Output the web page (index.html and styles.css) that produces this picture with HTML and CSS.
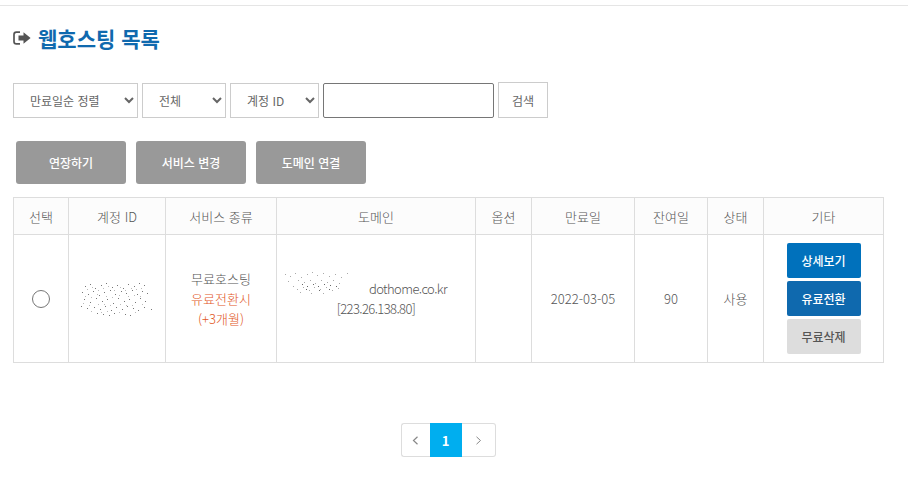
FILE: index.html
```html
<!DOCTYPE html>
<html lang="ko">
<head>
    <meta charset="UTF-8">
    <title>웹호스팅 목록</title>
    <link rel="stylesheet" href="styles.css">
</head>
<body>
<div class="wrap">
    <h1 class="title">
        <svg class="title-icon" width="18" height="16" viewBox="0 0 18 16">
            <path d="M7 2.2H3.4C2 2.2 1 3.2 1 4.6v6.8c0 1.4 1 2.4 2.4 2.4H7" fill="none" stroke="#555" stroke-width="1.7"/>
            <path d="M5.5 5.5h5V2.2L17.6 8l-7.100 5.800v-3.300h-5z" fill="#555"/>
        </svg>
        웹호스팅 목록
    </h1>

    <form class="search">
        <select class="sel sel-sort"><option>만료일순 정렬</option></select>
        <select class="sel sel-all"><option>전체</option></select>
        <select class="sel sel-id"><option>계정 ID</option></select>
        <input class="keyword" type="text">
        <button class="search-btn" type="button">검색</button>
    </form>

    <div class="actions">
        <a href="#" class="act">연장하기</a>
        <a href="#" class="act">서비스 변경</a>
        <a href="#" class="act">도메인 연결</a>
    </div>

    <table class="list">
        <colgroup>
            <col class="c1"><col class="c2"><col class="c3"><col class="c4"><col class="c5">
            <col class="c6"><col class="c7"><col class="c8"><col class="c9">
        </colgroup>
        <thead>
            <tr>
                <th>선택</th>
                <th>계정 ID</th>
                <th>서비스 종류</th>
                <th>도메인</th>
                <th>옵션</th>
                <th>만료일</th>
                <th>잔여일</th>
                <th>상태</th>
                <th>기타</th>
            </tr>
        </thead>
        <tbody>
            <tr>
                <td><input class="pick" type="radio"></td>
                <td>
                    <svg class="noise" width="76" height="38" viewBox="0 0 76 38">
                        <path fill="#777" d="M6 6h1v1H6zM11 4h1v1h-1zM16 8h1v1h-1zM22 5h1v1h-1zM27 3h1v1h-1zM33 7h1v1h-1zM38 5h1v1h-1zM44 8h1v1h-1zM49 4h1v1h-1zM55 6h1v1h-1zM60 3h1v1h-1zM65 5h1v1h-1zM3 12h1v1H3zM9 14h1v1H9zM14 11h1v1h-1zM20 15h1v1h-1zM25 12h1v1h-1zM31 10h1v1h-1zM36 14h1v1h-1zM42 11h1v1h-1zM47 13h1v1h-1zM53 10h1v1h-1zM58 14h1v1h-1zM63 11h1v1h-1zM68 13h1v1h-1zM5 19h1v1H5zM11 22h1v1h-1zM17 18h1v1h-1zM23 21h1v1h-1zM28 19h1v1h-1zM34 23h1v1h-1zM39 18h1v1h-1zM45 21h1v1h-1zM50 19h1v1h-1zM56 22h1v1h-1zM61 18h1v1h-1zM66 21h1v1h-1zM2 26h1v1H2zM8 28h1v1H8zM15 27h1v1h-1zM21 29h1v1h-1zM26 26h1v1h-1zM32 30h1v1h-1zM37 27h1v1h-1zM43 29h1v1h-1zM48 26h1v1h-1zM54 28h1v1h-1zM59 30h1v1h-1zM65 27h1v1h-1zM72 29h1v1h-1zM18 33h1v1h-1zM24 34h1v1h-1zM30 35h1v1h-1zM35 33h1v1h-1zM46 34h1v1h-1zM51 35h1v1h-1z"/>
                        <path fill="#bbb" d="M8 9h1v1H8zM13 7h1v1h-1zM19 10h1v1h-1zM24 8h1v1h-1zM29 6h1v1h-1zM35 10h1v1h-1zM41 7h1v1h-1zM46 10h1v1h-1zM52 8h1v1h-1zM57 9h1v1h-1zM62 8h1v1h-1zM6 16h1v1H6zM12 17h1v1h-1zM18 14h1v1h-1zM27 16h1v1h-1zM33 17h1v1h-1zM40 15h1v1h-1zM49 16h1v1h-1zM55 15h1v1h-1zM61 16h1v1h-1zM4 23h1v1H4zM10 25h1v1h-1zM19 24h1v1h-1zM25 24h1v1h-1zM31 25h1v1h-1zM41 24h1v1h-1zM47 25h1v1h-1zM53 25h1v1h-1zM63 24h1v1h-1zM12 31h1v1h-1zM22 32h1v1h-1zM28 31h1v1h-1zM40 32h1v1h-1zM56 32h1v1h-1z"/>
                    </svg>
                </td>
                <td class="service">
                    무료호스팅<br>
                    <span class="orange">유료전환시<br>(+3개월)</span>
                </td>
                <td class="domain">
                    <span class="host">
                        <svg class="noise-over" width="68" height="24" viewBox="0 0 68 24">
                            <path fill="#aaa" d="M2 3h1v1H2zM7 5h1v1H7zM12 2h1v1h-1zM18 6h1v1h-1zM24 3h1v1h-1zM29 1h1v1h-1zM34 4h1v1h-1zM40 2h1v1h-1zM46 5h1v1h-1zM52 3h1v1h-1zM58 6h1v1h-1zM64 2h1v1h-1zM5 10h1v1H5zM15 9h1v1h-1zM21 11h1v1h-1zM27 9h1v1h-1zM32 12h1v1h-1zM38 9h1v1h-1zM44 11h1v1h-1zM50 9h1v1h-1zM56 12h1v1h-1zM10 15h1v1h-1zM14 18h1v1h-1zM20 16h1v1h-1zM26 19h1v1h-1zM31 16h1v1h-1zM37 18h1v1h-1zM43 16h1v1h-1zM49 19h1v1h-1zM55 17h1v1h-1zM17 21h1v1h-1zM28 22h1v1h-1zM40 22h1v1h-1z"/>
                            <path fill="#666" d="M19 13h1v1h-1zM24 15h1v1h-1zM30 13h1v1h-1zM35 15h1v1h-1zM41 13h1v1h-1zM47 14h1v1h-1zM53 15h1v1h-1zM23 18h1v1h-1zM36 19h1v1h-1zM46 18h1v1h-1z"/>
                        </svg>
                        <span class="host-name">dothome.co.kr</span>
                    </span><br>
                    [223.26.138.80]
                </td>
                <td></td>
                <td>2022-03-05</td>
                <td>90</td>
                <td>사용</td>
                <td class="etc">
                    <a href="#" class="btn btn-blue">상세보기</a>
                    <a href="#" class="btn btn-navy">유료전환</a>
                    <a href="#" class="btn btn-gray">무료삭제</a>
                </td>
            </tr>
        </tbody>
    </table>

    <div class="paging">
        <a href="#" class="prev">
            <svg width="7" height="9" viewBox="0 0 7 9"><path d="M5.500 .8 1.500 4.500l4 3.700" fill="none" stroke="#888" stroke-width="1.200"/></svg>
        </a>
        <a href="#" class="on">1</a>
        <a href="#" class="next">
            <svg width="7" height="9" viewBox="0 0 7 9"><path d="M1.500 .8l4 3.700-4 3.700" fill="none" stroke="#888" stroke-width="1"/></svg>
        </a>
    </div>
</div>
</body>
</html>
```

FILE: styles.css
```css
*{box-sizing: border-box}
body{
    margin: 0;
    padding: 0;
    background: #fff;
    color: #555;
    font-family: "Noto Sans CJK KR", "Noto Sans", sans-serif;
    font-size: 13px;
}
a{text-decoration: none}
.wrap{
    width: 883px;
    margin-top: 5px;
    padding-left: 13px;
    border-top: 1px solid #e5e5e5;
    box-sizing: content-box;
    padding-right: 12px;
}
.title{
    display: flex;
    align-items: center;
    gap: 7px;
    height: 32px;
    margin: 16px 0 0;
    font-size: 21px;
    font-weight: 700;
    color: #0f69ae;
}
.title-icon{flex: none}

/* search */
.search{
    display: flex;
    align-items: center;
    gap: 4px;
    height: 36px;
    margin-top: 28px;
}
.sel{
    height: 35px;
    padding-left: 12px;
    border: 1px solid #ccc;
    background: #fff;
    color: #666;
    font-family: inherit;
    font-size: 12px;
}
.sel-sort{width: 125px}
.sel-all{width: 84px}
.sel-id{width: 89px}
.keyword{
    width: 171px;
    height: 35px;
    border: 1px solid #767676;
    border-radius: 2px;
    background: #fff;
}
.search-btn{
    width: 50px;
    height: 36px;
    padding: 0;
    border: 1px solid #ccc;
    background: #fff;
    color: #666;
    font-family: inherit;
    font-size: 12px;
}

/* buttons */
.actions{
    display: flex;
    gap: 9px;
    margin: 23px 0 13px 3px;
}
.act{
    width: 110px;
    height: 43px;
    line-height: 43px;
    margin-right: 1px;
    border-radius: 3px;
    background: #999;
    color: #fff;
    font-size: 12px;
    font-weight: 500;
    text-align: center;
}

/* table */
.list{
    width: 870px;
    border-collapse: collapse;
    table-layout: fixed;
}
.c1{width: 55px}
.c2{width: 97px}
.c3{width: 111px}
.c4{width: 199px}
.c5{width: 56px}
.c6{width: 103px}
.c7{width: 73px}
.c8{width: 56px}
.c9{width: 120px}
.list th, .list td{
    border: 1px solid #ddd;
    padding: 0;
    text-align: center;
    vertical-align: middle;
    font-weight: 300;
    font-size: 13px;
    color: #555;
}
.list th{
    height: 37px;
    background: #fcfcfc;
}
.list td{
    height: 128px;
    line-height: 20px;
}
.pick{
    display: block;
    width: 18px;
    height: 18px;
    margin: 0 auto;
}
.noise{
    display: block;
    margin: 0 auto;
}
.orange{color: #e2571e}
.domain{letter-spacing: -.6px}
.host{
    position: relative;
    display: inline-block;
    padding-left: 64px;
}
.noise-over{
    position: absolute;
    left: -22px;
    top: -8px;
}
.etc a{display: block}
.btn{
    width: 74px;
    height: 35px;
    line-height: 35px;
    margin: 0 auto 3px;
    border-radius: 2px;
    color: #fff;
    font-size: 12px;
    font-weight: 500;
}
.btn:last-child{margin-bottom: 0}
.btn-blue{background: #0071bc}
.btn-navy{background: #0f69ae}
.btn-gray{background: #ddd;color: #555}

/* paging */
.paging{
    display: flex;
    justify-content: center;
    width: 870px;
    margin-top: 60px;
}
.paging a{
    display: flex;
    align-items: center;
    justify-content: center;
    height: 34px;
    border: 1px solid #ddd;
    background: #fff;
}
.prev{
    width: 29px;
    border-right: 0 !important;
    border-radius: 3px 0 0 3px;
}
.next{
    width: 34px;
    border-left: 0 !important;
    border-radius: 0 3px 3px 0;
}
.paging .on{
    width: 32px;
    border: 0;
    background: #00aeef;
    color: #fff;
    font-size: 13px;
    font-weight: 700;
}
```
